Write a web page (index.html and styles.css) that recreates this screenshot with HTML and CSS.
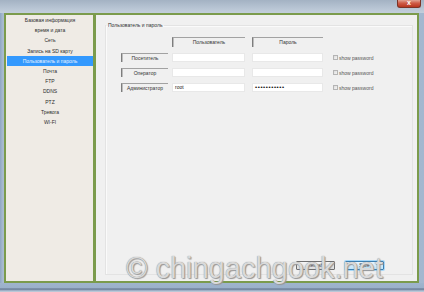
FILE: index.html
```html
<!DOCTYPE html>
<html lang="ru">
<head>
<meta charset="utf-8">
<title>Пользователь и пароль</title>
<link rel="stylesheet" href="styles.css">
</head>
<body>
<div class="window">
  <div class="titlebar">
    <div class="close">x</div>
  </div>
  <div class="client">
    <nav class="side">
      <div class="item">Базовая информация</div>
      <div class="item">время и дата</div>
      <div class="item">Сеть</div>
      <div class="item">Запись на SD карту</div>
      <div class="item active">Пользователь и пароль</div>
      <div class="item">Почта</div>
      <div class="item">FTP</div>
      <div class="item">DDNS</div>
      <div class="item">PTZ</div>
      <div class="item">Тревога</div>
      <div class="item">WI-FI</div>
    </nav>
    <main class="main">
      <fieldset class="group">
        <legend class="legend">Пользователь и пароль</legend>
        <div class="grid">
          <div></div>
          <div class="hdr">Пользователь</div>
          <div class="hdr">Пароль</div>
          <div></div>

          <div class="lbl">Посетитель</div>
          <div class="inp"></div>
          <div class="inp"></div>
          <div class="chk"><span class="box"></span>show password</div>

          <div class="lbl">Оператор</div>
          <div class="inp"></div>
          <div class="inp"></div>
          <div class="chk"><span class="box"></span>show password</div>

          <div class="lbl">Администратор</div>
          <div class="inp">root</div>
          <div class="inp dots">•••••••••••</div>
          <div class="chk"><span class="box"></span>show password</div>
        </div>
        <div class="buttons">
          <div class="btn">Refresh</div>
          <div class="btn primary">Save</div>
        </div>
      </fieldset>
    </main>
  </div>
  <div class="bottom"></div>
  <div class="watermark">© chingachgook.net</div>
</div>
</body>
</html>
```

FILE: styles.css
```css
* { box-sizing: border-box; }
html, body { margin: 0; padding: 0; }
body {
  width: 424px;
  height: 292px;
  overflow: hidden;
  font-family: "Liberation Sans", Arial, sans-serif;
  background: #fff;
}
.window {
  position: relative;
  width: 424px;
  height: 292px;
  display: flex;
  flex-direction: column;
  background: linear-gradient(to right, #8fa6c3 0px, #a9bbd0 3px, #b2c3d6 50%, #a3b7cf 100%);
}
.titlebar {
  height: 13px;
  display: flex;
  justify-content: flex-end;
  align-items: flex-start;
  padding-right: 3px;
  background: linear-gradient(to bottom, #a3b2c3 0%, #b7c4d3 60%, #c3cfdc 100%);
}
.close {
  width: 24px;
  height: 8px;
  border: 1px solid #7b3326;
  border-top: none;
  border-radius: 0 0 3px 3px;
  background: linear-gradient(to bottom, #e0a394 0%, #cf5b46 45%, #b8351f 100%);
  color: #fff;
  font-size: 7px;
  font-weight: bold;
  line-height: 6px;
  text-align: center;
}
.client {
  flex: 1;
  display: flex;
  margin: 0 5px 0 4px;
}
.side {
  width: 91px;
  border: 2px solid #7b9b4c;
  background: #efebe5;
  padding: 0 0 0 1px;
  display: flex;
  flex-direction: column;
}
.item {
  height: 10.2px;
  line-height: 10.2px;
  font-size: 5px;
  color: #2d2d2d;
  text-align: center;
  white-space: nowrap;
}
.item.active {
  background: #3399fe;
  color: #e8f2ff;
}
.main {
  flex: 1;
  border: 2px solid #7b9b4c;
  border-left-width: 1px;
  background: #f0f0f0;
  display: flex;
  flex-direction: column;
  padding: 6px 4px 6px 9px;
}
.group {
  flex: 1;
  margin: 0;
  padding: 0;
  min-width: 0;
  border: 1px solid #e3e3e3;
  box-shadow: inset 1px 1px 0 #fafafa;
  display: flex;
  flex-direction: column;
}
.legend {
  padding: 0 2px;
  margin-left: 0;
  font-size: 5px;
  line-height: 8px;
  color: #2d2d2d;
}
.grid {
  margin: 8px 0 0 15px;
  display: grid;
  grid-template-columns: 47px 73px 74px auto;
  grid-template-rows: 10px 9px 9px 9px;
  column-gap: 4px;
  row-gap: 6px;
}
.grid > :nth-child(4n+3) { margin-left: 3px; }
.grid > :nth-child(4n) { margin-left: 6px; }
.hdr {
  border-top: 1px solid #a2a2a2;
  border-left: 1px solid #7d7d7d;
  box-shadow: inset 1px 0 0 #bdbdbd;
  font-size: 5px;
  line-height: 9px;
  text-align: center;
  color: #333;
}
.lbl {
  border-top: 1px solid #a2a2a2;
  border-left: 1px solid #7d7d7d;
  box-shadow: inset 1px 0 0 #bdbdbd;
  font-size: 5px;
  line-height: 8px;
  text-align: center;
  color: #333;
}
.inp {
  background: #fff;
  border: 1px solid #e8e8e8;
  font-size: 5px;
  line-height: 7px;
  padding-left: 2px;
  color: #222;
}
.inp.dots {
  font-size: 6px;
  font-weight: bold;
  letter-spacing: 0.6px;
  padding-left: 2px;
  color: #111;
}
.chk {
  display: flex;
  align-items: center;
  gap: 1px;
  font-size: 5px;
  color: #555;
  white-space: nowrap;
}
.box {
  width: 5px;
  height: 5px;
  border: 1px solid #b4b4b4;
  background: linear-gradient(135deg, #dcdcdc, #f4f4f4);
}
.buttons {
  margin-top: auto;
  margin-bottom: 4px;
  padding-right: 28px;
  display: flex;
  justify-content: flex-end;
  align-items: center;
  gap: 10px;
}
.btn {
  width: 39px;
  height: 9px;
  border: 1px solid #707070;
  border-radius: 1px;
  background: linear-gradient(to bottom, #f6f6f6, #dddddd);
  font-size: 4.5px;
  line-height: 7px;
  text-align: center;
  color: #222;
}
.btn.primary {
  border-color: #3c7fb1;
  background: linear-gradient(to bottom, #eaf6fd, #bee6fd);
  box-shadow: 0 0 0 1px #a8d8f8;
}
.bottom {
  height: 9px;
  background: linear-gradient(to bottom, #9fb4cd 0px, #9ab0ca 5px, #5f7088 6px, #8ea3bd 7px, #c9d3de 9px);
}
.watermark {
  position: absolute;
  left: 126px;
  top: 254px;
  font-family: "Liberation Sans", Arial, sans-serif;
  font-size: 29px;
  line-height: 29px;
  white-space: nowrap;
  color: #d9d9d9;
  text-shadow: 0 0 1px #7d7d7d, 1px 1px 1px #9a9a9a;
}
```
